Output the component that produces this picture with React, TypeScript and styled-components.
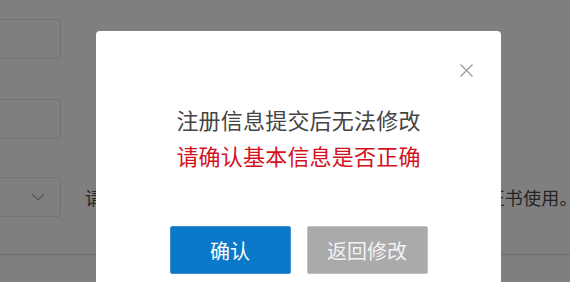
import styled, { createGlobalStyle } from 'styled-components';

const GlobalStyle = createGlobalStyle`
  html, body {
    margin: 0;
    padding: 0;
    background: #ffffff;
    font-family: "Noto Sans CJK SC", "Noto Sans", sans-serif;
    overflow: hidden;
  }
`;

const FORM_ROWS = [
  { type: 'input', gap: 19 },
  { type: 'input', gap: 40 },
  { type: 'select', gap: 38 },
];

export default function App() {
  return (
    <>
      <GlobalStyle />
      <Page>
        {FORM_ROWS.map((row, idx) => (
          <FormRow key={idx} $gap={row.gap}>
            <Field>
              {row.type === 'select' && (
                <svg width="14" height="8" viewBox="0 0 14 8" fill="none">
                  <path d="M1 1l6 6 6-6" stroke="#aaaaaa" strokeWidth="1.2" />
                </svg>
              )}
            </Field>
            {row.type === 'select' && (
              <Hint>请上传营业执照副本扫描件，作为企业资质认定的证书使用。</Hint>
            )}
          </FormRow>
        ))}
        <Divider />
      </Page>

      <Overlay />
      <Modal>
        <CloseButton aria-label="关闭">
          <svg width="13" height="13" viewBox="0 0 13 13" fill="none">
            <path d="M0.5 0.5l12 12M12.5 0.5l-12 12" stroke="#9a9a9a" strokeWidth="1.3" />
          </svg>
        </CloseButton>
        <Message>
          <p>注册信息提交后无法修改</p>
          <p className="warn">请确认基本信息是否正确</p>
        </Message>
        <Actions>
          <ActionButton $variant="primary">确认</ActionButton>
          <ActionButton $variant="muted">返回修改</ActionButton>
        </Actions>
      </Modal>
    </>
  );
}

const Page = styled.div`
  display: flex;
  flex-direction: column;
  width: 570px;
  height: 282px;
`;

const FormRow = styled.div<{ $gap: number }>`
  display: flex;
  align-items: center;
  gap: 24px;
  margin-top: ${(props) => props.$gap}px;
`;

const Field = styled.div`
  box-sizing: border-box;
  width: 61px;
  height: 40px;
  flex-shrink: 0;
  border: 1px solid #e6e6e6;
  border-left: none;
  border-radius: 0 4px 4px 0;
  background: #ffffff;
  display: flex;
  align-items: center;
  padding-left: 31px;
`;

const Hint = styled.span`
  font-size: 18px;
  line-height: 24px;
  letter-spacing: 0.25px;
  color: #4a4a4a;
  white-space: nowrap;
`;

const Divider = styled.hr`
  margin: 37px 0 0;
  border: none;
  border-top: 1px solid #dcdcdc;
  width: 100%;
`;

const Overlay = styled.div`
  position: fixed;
  inset: 0;
  background: rgba(0, 0, 0, 0.5);
`;

const Modal = styled.div`
  position: fixed;
  left: 96px;
  top: 31px;
  width: 405px;
  height: 320px;
  box-sizing: border-box;
  background: #ffffff;
  border-radius: 4px;
  padding-top: 70px;
  display: flex;
  flex-direction: column;
  align-items: center;
`;

const CloseButton = styled.button`
  position: absolute;
  top: 33px;
  right: 28px;
  width: 13px;
  height: 13px;
  padding: 0;
  border: none;
  background: none;
  display: flex;
  cursor: pointer;
`;

const Message = styled.div`
  text-align: center;

  p {
    margin: 0;
    font-size: 22px;
    line-height: 36px;
    letter-spacing: 0.2px;
    color: #444444;
  }

  .warn {
    color: #d2121c;
  }
`;

const Actions = styled.div`
  display: flex;
  gap: 16px;
  margin-top: 53px;
`;

const ActionButton = styled.button<{ $variant: 'primary' | 'muted' }>`
  box-sizing: border-box;
  width: 121px;
  height: 48px;
  border: 1px solid ${(props) => (props.$variant === 'primary' ? '#3d8fd2' : '#c2c2c2')};
  border-radius: 2px;
  background: ${(props) => (props.$variant === 'primary' ? '#0a79c9' : '#aaaaaa')};
  color: ${(props) => (props.$variant === 'primary' ? '#ffffff' : '#f2f2f2')};
  font-family: "Noto Sans CJK SC", "Noto Sans", sans-serif;
  font-size: 20px;
  cursor: pointer;
`;
